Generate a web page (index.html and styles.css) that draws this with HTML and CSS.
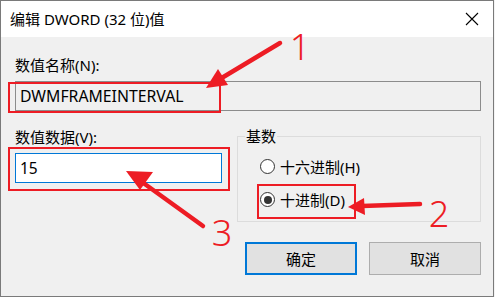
FILE: index.html
```html
<!DOCTYPE html>
<html lang="zh-CN">
<head>
    <meta charset="UTF-8">
    <title>编辑 DWORD (32 位)值</title>
    <link rel="stylesheet" href="styles.css">
</head>
<body>

    <div class="window">
        <div class="titlebar">
            <span class="title">编辑 DWORD (32 位)值</span>
            <svg class="close" width="14" height="14" viewBox="0 0 14 14">
                <path d="M1 1 L13 13 M13 1 L1 13" stroke="#000" stroke-width="1.1" fill="none"/>
            </svg>
        </div>

        <div class="content">
            <div class="label">数值名称(N):</div>
            <div class="field field-name">DWMFRAMEINTERVAL</div>

            <div class="row">
                <div class="col-data">
                    <div class="label">数值数据(V):</div>
                    <div class="field field-data">15</div>
                </div>
                <fieldset class="group">
                    <legend>基数</legend>
                    <div class="radio"><span class="dot"></span>十六进制(H)</div>
                    <div class="radio"><span class="dot checked"></span>十进制(D)</div>
                </fieldset>
            </div>

            <div class="buttons">
                <button class="btn btn-default">确定</button>
                <button class="btn">取消</button>
            </div>
        </div>
    </div>

    <!-- red annotations drawn over the dialog -->
    <svg class="marks" width="495" height="297" viewBox="0 0 495 297">
        <g fill="none" stroke="#ed1c24" stroke-width="2">
            <rect x="9" y="83" width="211" height="29"/>
            <rect x="9" y="148" width="220" height="42"/>
            <rect x="258" y="185" width="97" height="33"/>
        </g>
        <g stroke="#ed1c24" stroke-width="4.5" stroke-linecap="round">
            <line x1="280" y1="43" x2="220" y2="79"/>
            <line x1="420" y1="204" x2="362" y2="206"/>
            <line x1="203" y1="226" x2="142" y2="182"/>
        </g>
        <g fill="#ed1c24">
            <polygon points="206,88 228,85 218,69"/>
            <polygon points="348,207 364,198 365,215"/>
            <polygon points="126,171 153,172 140,190"/>
        </g>
        <g class="num" fill="#ed1c24" text-anchor="middle">
            <text x="300" y="60">1</text>
            <text x="439" y="227">2</text>
            <text x="222" y="246">3</text>
        </g>
    </svg>

</body>
</html>
```

FILE: styles.css
```css
body {
    margin: 0;
    padding: 0;
    background-color: #f3f3f3;
    font-family: "Noto Sans", "Noto Sans CJK SC", sans-serif;
    font-size: 15px;
    color: #000;
}
.window {
    width: 494px;
    height: 297px;
    box-sizing: border-box;
    border: 1px solid #7a7a7a;
    background-color: #f0f0f0;
    display: flex;
    flex-direction: column;
}
.titlebar {
    height: 36px;
    background-color: #fff;
    display: flex;
    align-items: center;
    justify-content: space-between;
    padding: 0 14px 0 9px;
}
.title {
    line-height: 20px;
}
.close {
    display: block;
}
.content {
    padding: 18px 12px 0 14px;
}
.label {
    line-height: 20px;
    height: 20px;
}
.field {
    box-sizing: border-box;
    height: 30px;
    line-height: 28px;
    padding-left: 4px;
    margin-top: 6px;
}
.field-name {
    width: 466px;
    border: 1px solid #8c8c8c;
    background-color: #f0f0f0;
    font-size: 15.8px;
}
.field-data {
    width: 207px;
    border: 1px solid #0078d7;
    background-color: #fff;
    font-size: 15.5px;
}
.row {
    display: flex;
    margin-top: 16px;
}
.col-data {
    width: 207px;
}
.group {
    margin: 0 0 0 15px;
    width: 244px;
    box-sizing: border-box;
    border: 1px solid #dcdcdc;
    padding: 5px 0 5px 22px;
}
.group legend {
    margin-left: -15px;
    padding: 0 1px;
    line-height: 18px;
}
.radio {
    height: 33px;
    display: flex;
    align-items: center;
}
.dot {
    width: 13px;
    height: 13px;
    border: 1px solid #333;
    border-radius: 50%;
    background-color: #fff;
    margin-right: 5px;
    display: flex;
    align-items: center;
    justify-content: center;
}
.dot.checked::after {
    content: "";
    width: 8px;
    height: 8px;
    border-radius: 50%;
    background-color: #333;
}
.buttons {
    display: flex;
    justify-content: flex-end;
    gap: 12px;
    margin-top: 20px;
}
.btn {
    width: 112px;
    height: 33px;
    box-sizing: border-box;
    border: 1px solid #adadad;
    background-color: #e1e1e1;
    font-family: "Noto Sans", "Noto Sans CJK SC", sans-serif;
    font-size: 15px;
    color: #000;
    padding: 0;
}
.btn-default {
    border: 2px solid #0078d7;
}
.marks {
    position: absolute;
    left: 0;
    top: 0;
    pointer-events: none;
}
.num {
    font-family: "Noto Sans", sans-serif;
    font-size: 36px;
    font-weight: 300;
}
```
